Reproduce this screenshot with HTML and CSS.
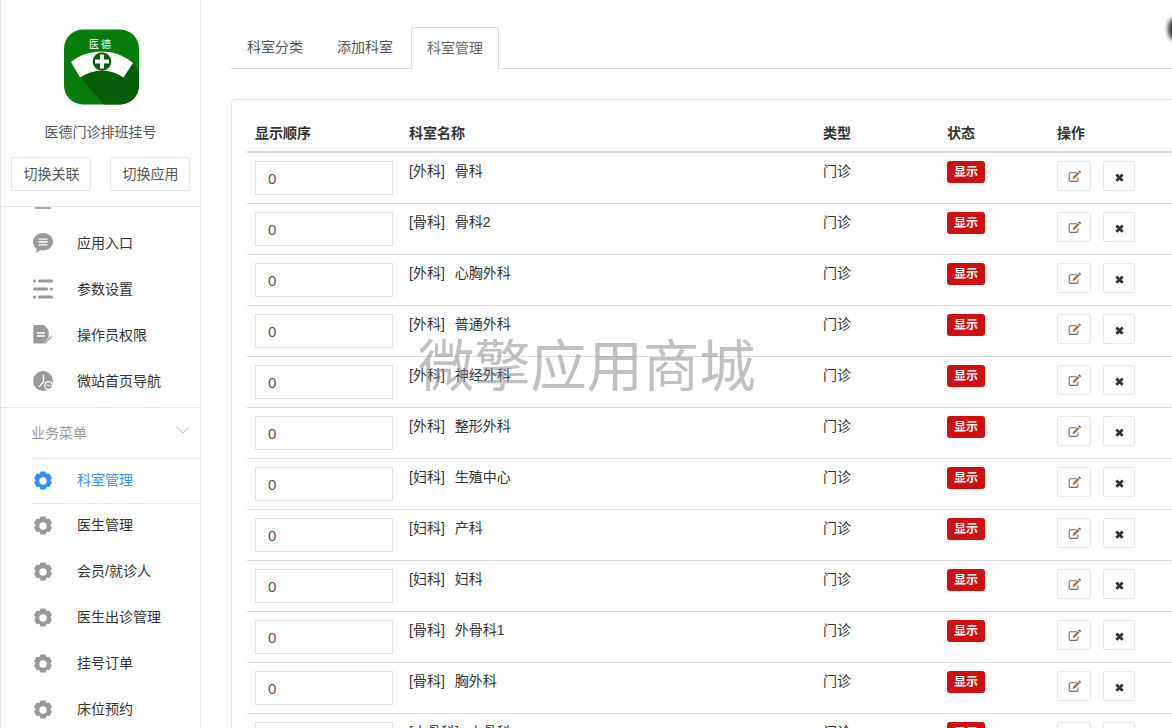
FILE: index.html
```html
<!DOCTYPE html>
<html lang="zh">
<head>
<meta charset="utf-8">
<title>科室管理</title>
<link rel="stylesheet" href="styles.css">
</head>
<body>
<svg class="defs" width="0" height="0" aria-hidden="true">
  <defs>
    <symbol id="gear" viewBox="0 0 20 20">
      <path fill-rule="evenodd" d="M7.600 0.400h4.800l1.200 2.500 2.900-.2 2.400 4.200-1.600 2.400 1.600 2.400-2.400 4.200-2.900-.2-1.200 2.900H7.600l-1.200-2.900-2.900.2-2.400-4.200 1.600-2.400-1.600-2.400 2.400-4.200 2.900.2zM10 6.300a3.700 3.700 0 1 0 0 7.400 3.700 3.700 0 0 0 0-7.400z"/>
    </symbol>
    <symbol id="edit" viewBox="0 0 14 14">
      <path fill="none" stroke="#6d6a8a" stroke-width="1.200" d="M9.500 3H2.500a1.200 1.200 0 0 0-1.200 1.200v6.800a1.200 1.200 0 0 0 1.200 1.200h7a1.200 1.200 0 0 0 1.200-1.200V8"/>
      <path fill="#a8703a" d="M5.500 7.400 10.800 2.100l1.700 1.700-5.300 5.300-2.200.5z"/>
      <path fill="#444" d="M11.300 1.600 12 .9a.6.6 0 0 1 .8 0l.9.9a.6.6 0 0 1 0 .8l-.7.7z"/>
    </symbol>
    <symbol id="close" viewBox="0 0 10 10">
      <path fill="#333" d="M2.600.6 5 3 7.400.6 9.600 2.800 7.200 5.200 9.600 7.600 7.400 9.800 5 7.400 2.600 9.800 .4 7.600 2.800 5.200 .4 2.800z"/>
    </symbol>
  </defs>
</svg>

<div class="app">
  <aside class="sidebar">
    <div class="brand">
      <svg class="logo" viewBox="0 0 75 76" aria-hidden="true">
        <defs><clipPath id="logoClip"><rect x="0" y="0.500" width="75" height="75" rx="19"/></clipPath></defs>
        <g clip-path="url(#logoClip)">
          <rect width="75" height="76" fill="#067d0c"/>
          <path d="M16 48 C30 40 48 40 59 48 L69 34 L76 44 V76 H40z" fill="#055d08"/>
          <path d="M7 33 C25 19 51 19 69 34 L59.500 48.500 C46 39 30 39 16 48.500z" fill="#fff"/>
          <circle cx="38" cy="32.500" r="9.300" fill="#055d08"/>
          <path d="M36 25.500h4v5h5v4h-5v5h-4v-5h-5v-4h5z" fill="#fff"/>
        </g>
        <text x="36" y="19" class="logo-text" text-anchor="middle">医 德</text>
      </svg>
      <div class="brand-name">医德门诊排班挂号</div>
      <div class="brand-actions">
        <a class="btn-switch">切换关联</a>
        <a class="btn-switch">切换应用</a>
      </div>
    </div>
    <div class="menu">
      <div class="menu-stub"></div>
      <a class="menu-item">
        <svg class="mi" viewBox="0 0 20 20" aria-hidden="true"><path fill="#999" d="M10 0c5.500 0 10 3.800 10 8.700s-4.500 8.700-10 8.700c-1 0-1.900-.1-2.800-.4C5.800 18.400 4.200 19.600 2.500 20c.8-1.300 1.200-2.800 1.100-4.200C1.400 14.200 0 11.600 0 8.700 0 3.800 4.500 0 10 0z"/><path stroke="#fff" stroke-width="1.300" d="M5.500 6.200h9M5.500 9h9M5.500 11.800h9"/></svg>
        <span>应用入口</span>
      </a>
      <a class="menu-item">
        <svg class="mi" viewBox="0 0 20 20" aria-hidden="true"><g fill="#999"><rect x="0" y="0.500" width="3" height="3" rx="1.500"/><rect x="5" y="0.500" width="15" height="3" rx="1.500"/><rect x="0" y="8.500" width="15" height="3" rx="1.500"/><rect x="17" y="8.500" width="3" height="3" rx="1.500"/><rect x="0" y="16.500" width="3" height="3" rx="1.500"/><rect x="5" y="16.500" width="15" height="3" rx="1.500"/></g></svg>
        <span>参数设置</span>
      </a>
      <a class="menu-item">
        <svg class="mi" viewBox="0 0 20 20" aria-hidden="true"><path fill="#999" d="M1.200 0h9.800l4.600 5v7l-5 6.500H1.200a.8.800 0 0 1-.8-.8V.8a.8.800 0 0 1 .8-.8z"/><path stroke="#fff" stroke-width="1.300" d="M4 8h8M4 11h8"/><path stroke="#999" stroke-width="1.500" d="M11.500 18.500 18.500 11.500"/></svg>
        <span>操作员权限</span>
      </a>
      <a class="menu-item">
        <svg class="mi" viewBox="0 0 20 20" aria-hidden="true"><circle cx="10" cy="10" r="10" fill="#999"/><path fill="none" stroke="#fff" stroke-width="1.300" d="M10.500 3.500V11L6 16"/><circle cx="15.500" cy="14.500" r="4.500" fill="#fff"/><circle cx="15.500" cy="14.500" r="3.200" fill="#999"/><path stroke="#fff" d="M13.800 14.500h3.400"/></svg>
        <span>微站首页导航</span>
      </a>
      <div class="menu-group">
        <span>业务菜单</span>
        <svg class="chev" viewBox="0 0 14 8" aria-hidden="true"><path fill="none" stroke="#bbb" stroke-width="1" d="M1 1l6 6 6-6"/></svg>
      </div>
      <a class="menu-item is-active"><svg class="mi"><use href="#gear"/></svg><span>科室管理</span></a>
      <div class="menu-rest">
        <a class="menu-item"><svg class="mi"><use href="#gear"/></svg><span>医生管理</span></a>
        <a class="menu-item"><svg class="mi"><use href="#gear"/></svg><span>会员/就诊人</span></a>
        <a class="menu-item"><svg class="mi"><use href="#gear"/></svg><span>医生出诊管理</span></a>
        <a class="menu-item"><svg class="mi"><use href="#gear"/></svg><span>挂号订单</span></a>
        <a class="menu-item"><svg class="mi"><use href="#gear"/></svg><span>床位预约</span></a>
      </div>
    </div>
  </aside>

  <main class="content">
    <nav class="tabs">
      <a class="tab">科室分类</a>
      <a class="tab">添加科室</a>
      <a class="tab is-current">科室管理</a>
    </nav>
    <section class="card">
      <table class="grid">
        <thead>
          <tr><th class="c-order">显示顺序</th><th class="c-name">科室名称</th><th class="c-type">类型</th><th class="c-state">状态</th><th>操作</th></tr>
        </thead>
        <tbody>
          <tr><td><input class="order" value="0"></td><td><span class="dept">[外科]</span>骨科</td><td>门诊</td><td><span class="tag">显示</span></td><td><div class="ops"><a class="op op-edit"><svg><use href="#edit"/></svg></a><a class="op op-del"><svg><use href="#close"/></svg></a></div></td></tr>
          <tr><td><input class="order" value="0"></td><td><span class="dept">[骨科]</span>骨科2</td><td>门诊</td><td><span class="tag">显示</span></td><td><div class="ops"><a class="op op-edit"><svg><use href="#edit"/></svg></a><a class="op op-del"><svg><use href="#close"/></svg></a></div></td></tr>
          <tr><td><input class="order" value="0"></td><td><span class="dept">[外科]</span>心胸外科</td><td>门诊</td><td><span class="tag">显示</span></td><td><div class="ops"><a class="op op-edit"><svg><use href="#edit"/></svg></a><a class="op op-del"><svg><use href="#close"/></svg></a></div></td></tr>
          <tr><td><input class="order" value="0"></td><td><span class="dept">[外科]</span>普通外科</td><td>门诊</td><td><span class="tag">显示</span></td><td><div class="ops"><a class="op op-edit"><svg><use href="#edit"/></svg></a><a class="op op-del"><svg><use href="#close"/></svg></a></div></td></tr>
          <tr><td><input class="order" value="0"></td><td><span class="dept">[外科]</span>神经外科</td><td>门诊</td><td><span class="tag">显示</span></td><td><div class="ops"><a class="op op-edit"><svg><use href="#edit"/></svg></a><a class="op op-del"><svg><use href="#close"/></svg></a></div></td></tr>
          <tr><td><input class="order" value="0"></td><td><span class="dept">[外科]</span>整形外科</td><td>门诊</td><td><span class="tag">显示</span></td><td><div class="ops"><a class="op op-edit"><svg><use href="#edit"/></svg></a><a class="op op-del"><svg><use href="#close"/></svg></a></div></td></tr>
          <tr><td><input class="order" value="0"></td><td><span class="dept">[妇科]</span>生殖中心</td><td>门诊</td><td><span class="tag">显示</span></td><td><div class="ops"><a class="op op-edit"><svg><use href="#edit"/></svg></a><a class="op op-del"><svg><use href="#close"/></svg></a></div></td></tr>
          <tr><td><input class="order" value="0"></td><td><span class="dept">[妇科]</span>产科</td><td>门诊</td><td><span class="tag">显示</span></td><td><div class="ops"><a class="op op-edit"><svg><use href="#edit"/></svg></a><a class="op op-del"><svg><use href="#close"/></svg></a></div></td></tr>
          <tr><td><input class="order" value="0"></td><td><span class="dept">[妇科]</span>妇科</td><td>门诊</td><td><span class="tag">显示</span></td><td><div class="ops"><a class="op op-edit"><svg><use href="#edit"/></svg></a><a class="op op-del"><svg><use href="#close"/></svg></a></div></td></tr>
          <tr><td><input class="order" value="0"></td><td><span class="dept">[骨科]</span>外骨科1</td><td>门诊</td><td><span class="tag">显示</span></td><td><div class="ops"><a class="op op-edit"><svg><use href="#edit"/></svg></a><a class="op op-del"><svg><use href="#close"/></svg></a></div></td></tr>
          <tr><td><input class="order" value="0"></td><td><span class="dept">[骨科]</span>胸外科</td><td>门诊</td><td><span class="tag">显示</span></td><td><div class="ops"><a class="op op-edit"><svg><use href="#edit"/></svg></a><a class="op op-del"><svg><use href="#close"/></svg></a></div></td></tr>
          <tr><td><input class="order" value="0"></td><td><span class="dept">[小骨科]</span>小骨科</td><td>门诊</td><td><span class="tag">显示</span></td><td><div class="ops"><a class="op op-edit"><svg><use href="#edit"/></svg></a><a class="op op-del"><svg><use href="#close"/></svg></a></div></td></tr>
        </tbody>
      </table>
    </section>
  </main>
</div>

<div class="watermark">微擎应用商城</div>
<div class="edge-dot"></div>
</body>
</html>
```

FILE: styles.css
```css
* { box-sizing: border-box; }
html, body {
  margin: 0;
  height: 100%;
  overflow: hidden;
  background: #fff;
}
body {
  font-family: "Liberation Sans", "Noto Sans CJK SC", sans-serif;
  font-size: 14px;
  color: #333;
}
a { color: inherit; text-decoration: none; }
.defs { position: absolute; }

.app {
  display: flex;
  width: 1172px;
  height: 728px;
  overflow: hidden;
}

/* Sidebar */
.sidebar {
  flex: 0 0 201px;
  height: 728px;
  border-left: 1px solid #e7e7e7;
  border-right: 1px solid #eee;
  overflow: hidden;
}
.brand {
  height: 207px;
  padding-top: 29px;
  border-bottom: 1px solid #e7e7eb;
  text-align: center;
}
.logo {
  display: block;
  width: 75px;
  height: 76px;
  margin: 0 0 0 63px;
}
.logo-text {
  font-family: "Noto Sans CJK SC", sans-serif;
  font-size: 10px;
  fill: #fff;
}
.brand-name {
  margin-top: 17px;
  line-height: 20px;
  font-size: 14px;
  color: #555;
}
.brand-actions {
  display: flex;
  justify-content: space-between;
  margin-top: 15px;
  padding: 0 10px;
}
.btn-switch {
  width: 80px;
  height: 34px;
  padding-left: 1px;
  line-height: 32px;
  border: 1px solid #e7e7eb;
  border-radius: 2px;
  color: #555;
  text-align: center;
}

.menu-stub {
  width: 16px;
  height: 2px;
  margin-left: 34px;
  background: #aaa;
}
.menu-item {
  display: flex;
  align-items: center;
  height: 46px;
  padding-left: 32px;
  color: #333;
}
.menu > .menu-item:first-of-type { margin-top: 11px; }
.menu-item span { margin: 0 0 2px 24px; }
.mi {
  flex: none;
  width: 20px;
  height: 20px;
  fill: #999;
}
.menu-group {
  position: relative;
  display: flex;
  align-items: center;
  height: 52px;
  margin-top: 3px;
  margin-left: -1px;
  padding: 0 0 4px 31px;
  border-top: 1px solid #e7e7eb;
  color: #999;
}
.menu-group::after {
  content: "";
  position: absolute;
  left: 31px;
  right: 0;
  bottom: 0;
  height: 1px;
  background: #e7e7eb;
}
.chev {
  position: absolute;
  right: 10px;
  top: 18px;
  width: 14px;
  height: 8px;
}
.is-active { color: #3295fd; height: 44px; }
.is-active .mi { fill: #2f8ffb; }
.is-active span { margin-bottom: 4px; }
.menu-rest { border-top: 1px solid #e7e7eb; margin-left: 30px; }
.menu-rest .menu-item { padding-left: 2px; }
.menu-rest .menu-item:first-child { margin-top: -1px; }
.menu-rest .menu-item span { margin-bottom: 4px; }

/* Main */
.content {
  flex: 1;
  min-width: 0;
  padding: 27px 0 0 30px;
}
.tabs {
  display: flex;
  height: 42px;
  border-bottom: 1px solid #ddd;
}
.tab {
  height: 42px;
  padding: 0 16px;
  line-height: 41px;
  color: #555;
}
.tab + .tab { margin-left: 2px; }
.tab.is-current {
  background: #fff;
  border: 1px solid #ddd;
  border-bottom-color: #fff;
  border-radius: 4px 4px 0 0;
  padding: 0 15px;
  color: #666;
}
.card {
  width: 960px;
  margin-top: 30px;
  padding: 15px 15px 0;
  border: 1px solid #e5e5e5;
  border-radius: 4px;
}
.grid {
  width: 925px;
  table-layout: fixed;
  border-collapse: collapse;
}
.grid th {
  height: 37px;
  padding: 0 8px 2px;
  text-align: left;
  font-weight: 700;
  font-size: 14px;
  color: #333;
  border-bottom: 2px solid #ddd;
  vertical-align: middle;
}
.c-order { width: 154px; }
.c-name { width: 414px; }
.c-type { width: 124px; }
.c-state { width: 110px; }
.grid td {
  height: 51px;
  padding: 8px;
  vertical-align: top;
  line-height: 20px;
  font-size: 14px;
  border-bottom: 1px solid #ddd;
  color: #333;
}
.order {
  display: block;
  width: 138px;
  height: 34px;
  padding: 6px 12px;
  border: 1px solid #e5e5e5;
  font: 15px "Liberation Sans", sans-serif;
  color: #555;
  outline: 0;
}
.dept { margin-right: 10px; }
.tag {
  display: block;
  width: 38px;
  height: 22px;
  border-radius: 3px;
  background: #d01010;
  color: #fff;
  font-size: 12px;
  font-weight: 700;
  line-height: 22px;
  text-align: center;
}
.ops { display: flex; gap: 12px; }
.op {
  display: flex;
  align-items: center;
  justify-content: center;
  height: 30px;
  border: 1px solid #e8e8e8;
  border-radius: 2px;
  background: #fff;
}
.op-edit { width: 34px; }
.op-del { width: 32px; padding-top: 2px; }
.op-edit svg { width: 13px; height: 13px; }
.op-del svg { width: 9px; height: 9px; }

.watermark {
  position: absolute;
  left: 418px;
  top: 328px;
  font-family: "Noto Sans CJK SC", sans-serif;
  font-size: 56.250px;
  font-weight: 400;
  line-height: 68px;
  color: rgba(140, 140, 140, 0.55);
  white-space: nowrap;
  pointer-events: none;
}
.edge-dot {
  position: absolute;
  left: 1168px;
  top: 18px;
  width: 12px;
  height: 22px;
  border-radius: 50%;
  background: #333;
  filter: blur(2px);
}
```
